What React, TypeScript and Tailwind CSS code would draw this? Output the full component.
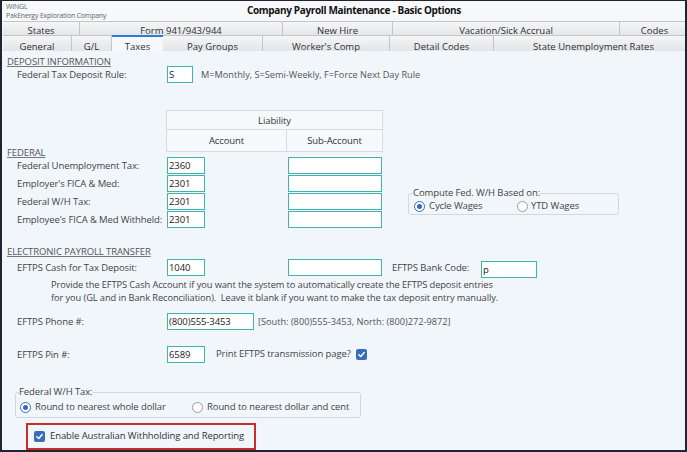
import React from "react";

const font = "font-['Open_Sans',sans-serif]";

function Input({ value, w, mt = "" }: { value?: string; w: string; mt?: string }) {
  return (
    <div
      className={`${w} ${mt} h-[17px] shrink-0 whitespace-nowrap border border-[#3fb3ae] bg-white pl-[1px] text-[9.5px] leading-[15px] text-[#1a1a1a]`}
    >
      {value}
    </div>
  );
}

function Radio({ on }: { on?: boolean }) {
  return on ? (
    <span className="flex h-[11px] w-[11px] shrink-0 items-center justify-center rounded-full border-[1.5px] border-[#3569b8] bg-white">
      <span className="h-[5px] w-[5px] rounded-full bg-[#3569b8]" />
    </span>
  ) : (
    <span className="h-[11px] w-[11px] shrink-0 rounded-full border border-[#9a9a9a] bg-white" />
  );
}

function Check() {
  return (
    <span className="flex h-[11px] w-[11px] shrink-0 items-center justify-center rounded-[2px] bg-[#3a6cbd]">
      <svg width="9" height="9" viewBox="0 0 10 10">
        <path d="M2 5.2 L4.2 7.3 L8 2.8" fill="none" stroke="white" strokeWidth="1.6" strokeLinecap="round" strokeLinejoin="round" />
      </svg>
    </span>
  );
}

export default function App() {
  return (
    <div
      className={`${font} h-[452px] w-[687px] overflow-hidden border-b-2 border-l-2 border-r-2 border-t border-[#1e2432] bg-[#f1f6fb] text-[#444]`}
    >
      {/* header */}
      <div className="flex h-[20px] bg-[#f6f8fa]">
        <div className="flex w-[245px] flex-col whitespace-nowrap pl-[4px] pt-[1px] text-[7px] leading-[9px] tracking-[-0.2px] text-[#666]">
          <span>WINGL</span>
          <span>PakEnergy Exploration Company</span>
        </div>
        <div className="whitespace-nowrap pt-[3px] text-[10px] font-bold leading-[13px] tracking-[-0.35px] text-[#111]">
          Company Payroll Maintenance - Basic Options
        </div>
      </div>

      {/* tab row 1 */}
      <div className="flex h-[14px] pl-[1px]">
        {[
          ["States", "w-[77px]"],
          ["Form 941/943/944", "w-[203px]"],
          ["New Hire", "w-[110px]"],
          ["Vacation/Sick Accrual", "w-[227px]"],
          ["Codes", "w-[70px]"],
        ].map(([l, w]) => (
          <div
            key={l}
            className={`${w} shrink-0 whitespace-nowrap border-r border-t border-[#c3c6c9] bg-gradient-to-b from-[#f5f6f7] to-[#e4e6e8] pt-[3px] text-center text-[9.5px] leading-[11px] text-[#303030]`}
          >
            {l}
          </div>
        ))}
      </div>

      {/* tab row 2 */}
      <div className="flex h-[16px] pl-[1px]">
        {[
          ["General", "w-[69px]"],
          ["G/L", "w-[40px]"],
          ["Taxes", "w-[51px]", true],
          ["Pay Groups", "w-[100px]"],
          ["Worker's Comp", "w-[127px]"],
          ["Detail Codes", "w-[104px]"],
          ["State Unemployment Rates", "w-[200px]"],
        ].map(([l, w, a]) =>
          a ? (
            <div
              key={l as string}
              className={`${w} shrink-0 whitespace-nowrap border-t-2 border-[#2f7ad6] bg-[#f6f9fc] pt-[4px] text-center text-[9.5px] leading-[11px] text-[#303030]`}
            >
              {l}
            </div>
          ) : (
            <div
              key={l as string}
              className={`${w} shrink-0 whitespace-nowrap border-r border-t border-[#c3c6c9] bg-gradient-to-b from-[#f5f6f7] to-[#e2e4e6] pt-[5px] text-center text-[9.5px] leading-[11px] text-[#303030]`}
            >
              {l}
            </div>
          )
        )}
      </div>

      {/* content */}
      <div className="whitespace-nowrap pl-[5px] text-[9.5px] tracking-[-0.1px]">
        {/* DEPOSIT INFORMATION */}
        <div className="mt-[5px] h-[10px] leading-[12px] text-[#555] underline decoration-[#777]">
          DEPOSIT INFORMATION
        </div>
        <div className="flex h-[17px] items-center">
          <div className="w-[160px] pl-[10px] leading-[17px]">Federal Tax Deposit Rule:</div>
          <Input value="S" w="w-[26px]" />
          <div className="ml-[8px] text-[9.2px] tracking-normal text-[#555]">M=Monthly, S=Semi-Weekly, F=Force Next Day Rule</div>
        </div>

        {/* Liability table */}
        <div className="ml-[159px] mt-[27px] w-[217px] border border-[#d6dbe0] bg-[#f6f9fc] text-[#333]">
          <div className="h-[19px] border-b border-[#d6dbe0] text-center leading-[19px]">Liability</div>
          <div className="flex h-[21px]">
            <div className="w-[120px] border-r border-[#d6dbe0] text-center leading-[21px]">Account</div>
            <div className="flex-1 text-center leading-[21px]">Sub-Account</div>
          </div>
        </div>

        {/* FEDERAL */}
        <div className="-mt-[5px] h-[10px] leading-[12px] text-[#555] underline decoration-[#777]">FEDERAL</div>
        <div className="flex">
          <div className="flex flex-col gap-[1px]">
            {[
              ["Federal Unemployment Tax:", "2360"],
              ["Employer's FICA & Med:", "2301"],
              ["Federal W/H Tax:", "2301"],
              ["Employee's FICA & Med Withheld:", "2301"],
            ].map(([l, v]) => (
              <div key={l} className="flex h-[17px] items-center">
                <div className="w-[160px] pl-[10px] leading-[17px]">{l}</div>
                <Input value={v} w="w-[38px]" />
                <div className="w-[83px]" />
                <Input w="w-[94px]" />
              </div>
            ))}
          </div>
          <div className="relative ml-[26px] mt-[36px] flex h-[22px] w-[211px] items-center rounded-[3px] border border-[#d2d7dc] pl-[5px] pt-[5px]">
            <span className="absolute -top-[7px] left-[4px] bg-[#f1f6fb] leading-[12px] text-[#444]">
              Compute Fed. W/H Based on:
            </span>
            <Radio on />
            <span className="ml-[4px] w-[88px]">Cycle Wages</span>
            <Radio />
            <span className="ml-[3px]">YTD Wages</span>
          </div>
        </div>

        {/* ELECTRONIC PAYROLL TRANSFER */}
        <div className="mt-[18px] h-[10px] leading-[12px] text-[#555] underline decoration-[#777]">
          ELECTRONIC PAYROLL TRANSFER
        </div>
        <div className="mt-[3px] flex items-start">
          <div className="w-[160px] pl-[10px] leading-[17px]">EFTPS Cash for Tax Deposit:</div>
          <Input value="1040" w="w-[38px]" />
          <div className="w-[83px]" />
          <Input w="w-[94px]" />
          <div className="ml-[10px] w-[89px] leading-[17px]">EFTPS Bank Code:</div>
          <Input value="p" w="w-[56px]" mt="mt-[2px]" />
        </div>
        <div className="pl-[44px] text-[9.3px] leading-[13px] text-[#444]">
          <div>Provide the EFTPS Cash Account if you want the system to automatically create the EFTPS deposit entries</div>
          <div>for you (GL and in Bank Reconciliation).&nbsp; Leave it blank if you want to make the tax deposit entry manually.</div>
        </div>
        <div className="mt-[9px] flex items-center">
          <div className="w-[160px] pl-[10px] leading-[17px]">EFTPS Phone #:</div>
          <Input value="(800)555-3453" w="w-[87px]" />
          <div className="ml-[4px] text-[9.2px] tracking-normal text-[#555]">[South: (800)555-3453, North: (800)272-9872]</div>
        </div>
        <div className="mt-[16px] flex items-center">
          <div className="w-[160px] pl-[10px] leading-[17px]">EFTPS Pin #:</div>
          <Input value="6589" w="w-[38px]" />
          <div className="ml-[11px]">Print EFTPS transmission page?</div>
          <span className="ml-[5px]">
            <Check />
          </span>
        </div>

        {/* Federal W/H Tax group */}
        <div className="relative ml-[8px] mt-[29px] flex h-[26px] w-[346px] items-center rounded-[3px] border border-[#d2d7dc] pl-[4px] pt-[4px]">
          <span className="absolute -top-[7px] left-[3px] bg-[#f1f6fb] leading-[12px] text-[#444]">Federal W/H Tax:</span>
          <Radio on />
          <span className="ml-[4px] w-[157px]">Round to nearest whole dollar</span>
          <Radio />
          <span className="ml-[4px]">Round to nearest dollar and cent</span>
        </div>

        {/* Australian */}
        <div className="ml-[19px] mt-[5px] flex h-[27px] w-[230px] items-center border-2 border-[#c42f2c] pl-[6px]">
          <Check />
          <span className="ml-[5px] text-[#333]">Enable Australian Withholding and Reporting</span>
        </div>
      </div>
    </div>
  );
}
